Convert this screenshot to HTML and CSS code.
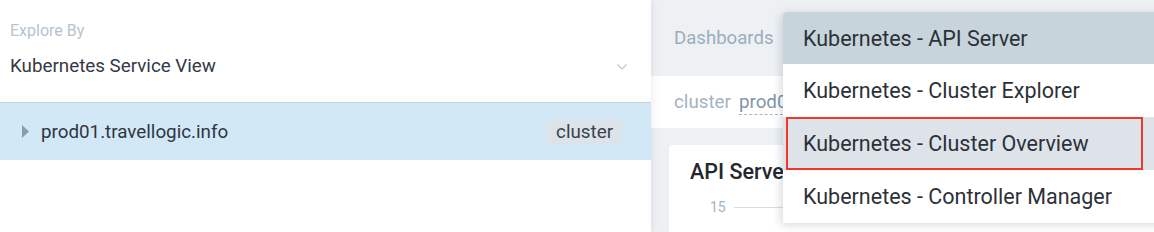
FILE: index.html
```html
<!DOCTYPE html>
<html>
<head>
<meta charset="utf-8">
<link rel="stylesheet" href="styles.css">
</head>
<body>
<div class="app">
  <aside class="explorer">
    <div class="explore-head">
      <div class="explore-label">Explore By</div>
      <div class="explore-select">
        <span>Kubernetes Service View</span>
        <svg class="chev" width="12" height="8" viewBox="0 0 12 8"><path d="M1.5 1.5 L6 6 L10.5 1.5" fill="none" stroke="#c3ccd6" stroke-width="1.4"/></svg>
      </div>
    </div>
    <div class="tree-row">
      <svg class="caret" width="9" height="15" viewBox="0 0 9 15"><path d="M1 1 L8 7.5 L1 14 Z" fill="#8d9bab"/></svg>
      <span class="node-name">prod01.travellogic.info</span>
      <span class="tag">cluster</span>
    </div>
  </aside>
  <main class="content">
    <div class="top-bar"><span class="crumb">Dashboards</span></div>
    <div class="filter-bar"><span class="f-key">cluster</span><span class="f-val">prod01.travellogic.info</span></div>
    <div class="card-area">
      <div class="card">
        <div class="card-title">API Server</div>
        <div class="axis"><span class="tick">15</span><span class="grid"></span></div>
      </div>
    </div>
    <ul class="menu">
      <li class="item active">Kubernetes - API Server</li>
      <li class="item">Kubernetes - Cluster Explorer</li>
      <li class="item hover"><span class="outline">Kubernetes - Cluster Overview</span></li>
      <li class="item">Kubernetes - Controller Manager</li>
    </ul>
  </main>
</div>
</body>
</html>
```
FILE: styles.css
```css
* { box-sizing: border-box; }
html, body { margin: 0; padding: 0; }
body {
  width: 1154px;
  height: 232px;
  overflow: hidden;
  font-family: Roboto, "Liberation Sans", sans-serif;
  background: #fff;
}
.app { display: flex; height: 232px; position: relative; }
.explorer {
  width: 651px;
  flex: none;
  background: #fff;
  position: relative;
  z-index: 2;
  box-shadow: 2px 0 6px rgba(30, 50, 70, 0.08);
}
.explore-head {
  height: 103px;
  border-bottom: 1px solid #c9d1d9;
  padding: 21px 0 0 10px;
}
.explore-label { font-size: 16px; color: #b7c3cf; line-height: 20px; }
.explore-select {
  display: flex;
  align-items: center;
  justify-content: space-between;
  margin-top: 13px;
  padding-right: 23px;
  font-size: 18.8px;
  color: #333a44;
  line-height: 24px;
}
.chev { margin-top: 2px; }
.tree-row {
  height: 57px;
  background: #d2e8f7;
  display: flex;
  align-items: center;
  padding: 0 29px 0 21px;
}
.caret { margin-right: 11px; }
.node-name { font-size: 18.8px; color: #2f3640; flex: 1; }
.tag {
  background: #dce3e9;
  color: #3a424c;
  font-size: 18.8px;
  height: 26px;
  line-height: 26px;
  padding: 0 9px;
  border-radius: 2px;
}
.content {
  flex: 1;
  background: #eef1f4;
  position: relative;
  display: flex;
  flex-direction: column;
  overflow: hidden;
}
.top-bar {
  flex: none;
  height: 76px;
  display: flex;
  align-items: center;
  padding-left: 23px;
}
.crumb { font-size: 18.6px; color: #9cadbd; }
.filter-bar {
  flex: none;
  height: 52px;
  background: #fff;
  display: flex;
  align-items: center;
  padding-left: 23px;
  font-size: 18.8px;
  white-space: nowrap;
  overflow: hidden;
}
.f-key { color: #a3b3c2; margin-right: 8px; }
.f-val {
  color: #7f95aa;
  border-bottom: 1px dashed #a9b7c4;
  line-height: 24px;
  max-width: 44px;
  overflow: hidden;
}
.card-area { flex: none; padding: 17px 0 0 18px; }
.card {
  background: #fff;
  border-radius: 4px;
  height: 100px;
  padding: 14px 0 0 21px;
}
.card-title { font-size: 21.5px; font-weight: 500; color: #23282e; line-height: 26px; white-space: nowrap; }
.axis { display: flex; align-items: center; margin-top: 14px; padding-left: 20px; }
.tick { font-size: 14px; color: #a3b2c1; margin-right: 8px; }
.grid { height: 1px; width: 200px; background: #d6dde4; }
.menu {
  position: absolute;
  left: 132px;
  top: 12px;
  width: 400px;
  margin: 0;
  padding: 0;
  list-style: none;
  background: #fff;
  border-radius: 4px 0 0 0;
  box-shadow: -2px 2px 10px rgba(30, 50, 70, 0.18);
  z-index: 5;
}
.item {
  height: 53px;
  display: flex;
  align-items: center;
  padding-left: 20px;
  font-size: 21.5px;
  color: #2c3138;
  white-space: nowrap;
}
.item.active { background: #c8d4dc; border-radius: 4px 0 0 0; height: 52px; }
.item.hover { background: #dde3e9; padding-left: 3px; }
.outline {
  display: flex;
  align-items: center;
  width: 357px;
  height: 53px;
  border: 2px solid #f0372b;
  padding-left: 15px;
}
```
